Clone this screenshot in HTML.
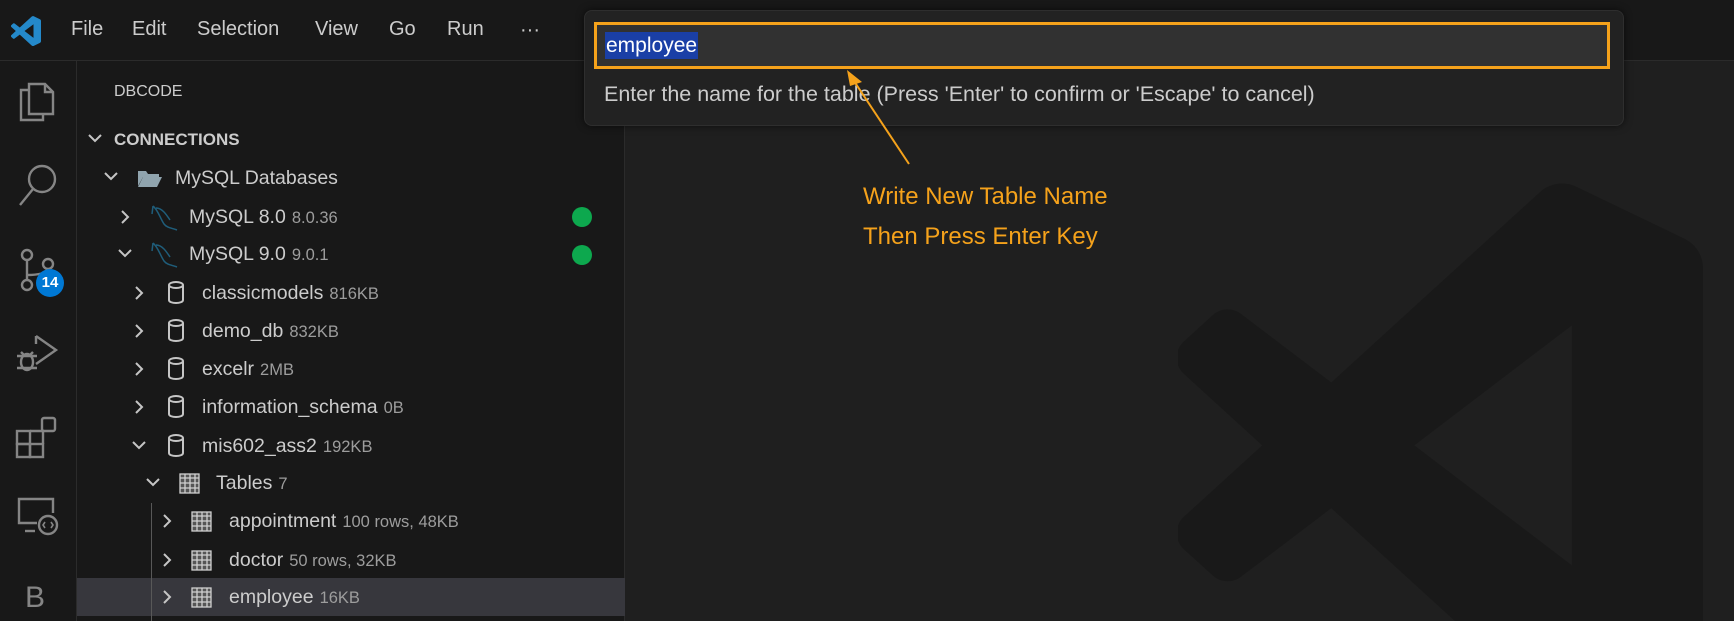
<!DOCTYPE html>
<html style="width:1734px;height:621px;overflow:hidden"><head><meta charset="utf-8"><style>
*{margin:0;padding:0;box-sizing:border-box}
body{width:1734px;height:621px;overflow:hidden;background:#1f1f1f;font-family:"Liberation Sans","DejaVu Sans",sans-serif;color:#cccccc;position:relative}
.abs{position:absolute}
#title{left:0;top:0;width:1734px;height:61px;background:#181818;border-bottom:1px solid #2b2b2b}
.menu{position:absolute;top:18px;font-size:20px;color:#cccccc}
#act{left:0;top:61px;width:77px;height:560px;background:#181818;border-right:1px solid #2b2b2b}
#side{left:77px;top:61px;width:548px;height:560px;background:#181818;border-right:1px solid #2b2b2b}
.row{position:absolute;left:0;height:38px;line-height:38px;font-size:19.5px;color:#cccccc;white-space:nowrap}
.d{color:#9d9d9d;font-size:16.5px;margin-left:6px}
</style></head><body>
<div id="title" class="abs"></div>
<svg class="abs" style="left:11px;top:16px" width="30" height="30" viewBox="0 0 100 100"><path fill="#2489ca" fill-rule="evenodd" d="M96.46 10.8L75.86.9C73.47-.25 70.62.24 68.75 2.11L29.2 38.19 11.98 25.12C10.37 23.9 8.12 24 6.63 25.36L1.12 30.37C-.7 32.02-.7 34.88 1.11 36.53L16.05 50.16 1.11 63.79C-.7 65.44-.7 68.3 1.12 69.950L6.63 74.96C8.12 76.32 10.37 76.42 11.98 75.2L29.2 62.13 68.75 98.21C70.62 100.08 73.47 100.57 75.86 99.42L96.46 89.52C98.62 88.48 100 86.29 100 83.89V16.43C100 14.03 98.62 11.84 96.46 10.8ZM75.02 27.3L45.01 50.16 75.02 73.02Z"/></svg>
<div class="menu" style="left:71px">File</div>
<div class="menu" style="left:132px">Edit</div>
<div class="menu" style="left:197px">Selection</div>
<div class="menu" style="left:315px">View</div>
<div class="menu" style="left:389px">Go</div>
<div class="menu" style="left:447px">Run</div>
<div class="menu" style="left:520px;top:19px">···</div>

<div id="act" class="abs"></div>
<svg class="abs" style="left:17px;top:80px" width="40" height="44" viewBox="0 0 40 44" fill="none" stroke="#858585" stroke-width="2.4"><path d="M12 10H4V40H26V34"/><path d="M12 4H28L36 12V34H12Z"/><path d="M28 4V12H36"/></svg>
<svg class="abs" style="left:17px;top:162px" width="42" height="46" fill="none" stroke="#858585" stroke-width="2.4"><circle cx="25" cy="17" r="13"/><path d="M16 27L3 43"/></svg>
<svg class="abs" style="left:18px;top:247px" width="40" height="46" fill="none" stroke="#858585" stroke-width="2.4"><circle cx="9" cy="8" r="5"/><circle cx="9" cy="38" r="5"/><circle cx="30" cy="17" r="5"/><path d="M9 13V33M9 28C20 28 30 26 30 22"/></svg>
<div class="abs" style="left:36px;top:269px;width:28px;height:28px;border-radius:14px;background:#0078d4;color:#fff;font-weight:bold;font-size:15px;text-align:center;line-height:28px">14</div>
<svg class="abs" style="left:12px;top:330px" width="48" height="48" fill="none" stroke="#858585" stroke-width="2.4"><path d="M24 6L44 20L24 34"/><path d="M24 6V14"/><ellipse cx="15" cy="32" rx="6" ry="8"/><path d="M5 26H25M5 38H25M9 22L12 25M21 22L18 25"/></svg>
<svg class="abs" style="left:14px;top:415px" width="46" height="46" fill="none" stroke="#858585" stroke-width="2.4"><rect x="3" y="16" width="13" height="13"/><rect x="3" y="29" width="13" height="13"/><rect x="16" y="29" width="13" height="13"/><rect x="28" y="3" width="13" height="13" rx="2"/><path d="M16 16H29V29"/></svg>
<svg class="abs" style="left:15px;top:495px" width="46" height="44" fill="none" stroke="#858585" stroke-width="2.4"><path d="M22 28H4V4H38V18"/><path d="M10 36H20"/><circle cx="33" cy="30" r="9"/><path d="M30 27L28 30L30 33M36 27L38 30L36 33" stroke-width="1.6"/></svg>
<div class="abs" style="left:25px;top:582px;font-size:30px;line-height:32px;color:#858585">B</div>

<div id="side" class="abs"></div>
<div class="abs" style="left:114px;top:83px;font-size:16px;color:#cccccc">DBCODE</div>
<div class="abs" style="left:77px;top:578px;width:548px;height:38px;background:#37373d"></div>
<div class="abs" style="left:151px;top:503px;width:1px;height:118px;background:#585858"></div>

<svg class="abs" style="left:0;top:0" width="625" height="621" fill="none" stroke="#c5c5c5" stroke-width="2">
<path d="M89 135L95 141L101 135"/>
<path d="M105 173L111 179L117 173"/>
<path d="M122 211L128 217L122 223"/>
<path d="M119 250L125 256L131 250"/>
<path d="M136 287L142 293L136 299"/>
<path d="M136 325L142 331L136 337"/>
<path d="M136 363L142 369L136 375"/>
<path d="M136 401L142 407L136 413"/>
<path d="M133 442L139 448L145 442"/>
<path d="M147 479L153 485L159 479"/>
<path d="M164 515L170 521L164 527"/>
<path d="M164 554L170 560L164 566"/>
<path d="M164 591L170 597L164 603"/>
</svg>
<div class="abs" style="left:114px;top:130px;font-size:17px;font-weight:bold;color:#cccccc">CONNECTIONS</div>
<svg class="abs" style="left:137px;top:168px" width="26" height="20"><path d="M1 3H9L11 6H22V9H6L1 18Z" fill="#90a4ae"/><path d="M6 9H25L20 19H1Z" fill="#90a4ae"/></svg>
<div class="row" style="left:175px;top:159px">MySQL Databases</div>
<svg class="abs" style="left:150px;top:204px" width="30" height="28" fill="none" stroke="#1f5d7a" stroke-width="1.5"><path d="M3 2C8 6 10 14 14 20C17 24 22 24 27 26M6 4C12 4 16 10 20 16M3 2L2 10"/></svg>
<svg class="abs" style="left:150px;top:241px" width="30" height="28" fill="none" stroke="#1f5d7a" stroke-width="1.5"><path d="M3 2C8 6 10 14 14 20C17 24 22 24 27 26M6 4C12 4 16 10 20 16M3 2L2 10"/></svg>
<div class="row" style="left:189px;top:198px">MySQL 8.0<span class="d">8.0.36</span></div>
<div class="row" style="left:189px;top:235px">MySQL 9.0<span class="d">9.0.1</span></div>
<div class="abs" style="left:572px;top:207px;width:20px;height:20px;border-radius:10px;background:#0da84e"></div>
<div class="abs" style="left:572px;top:245px;width:20px;height:20px;border-radius:10px;background:#0da84e"></div>
<svg class="abs" style="left:166px;top:281px" width="20" height="200" fill="none" stroke="#c5c5c5" stroke-width="2">
<g id="db"><ellipse cx="10" cy="4" rx="7" ry="3"/><path d="M3 4V19C3 23 17 23 17 19V4"/></g>
<use href="#db" y="38"/><use href="#db" y="76"/><use href="#db" y="114"/><use href="#db" y="153"/>
</svg>
<div class="row" style="left:202px;top:274px">classicmodels<span class="d">816KB</span></div>
<div class="row" style="left:202px;top:312px">demo_db<span class="d">832KB</span></div>
<div class="row" style="left:202px;top:350px">excelr<span class="d">2MB</span></div>
<div class="row" style="left:202px;top:388px">information_schema<span class="d">0B</span></div>
<div class="row" style="left:202px;top:427px">mis602_ass2<span class="d">192KB</span></div>
<svg class="abs" style="left:0;top:0" width="625" height="621" fill="none" stroke="#d0d0d0" stroke-width="1.3">
<g id="tb"><rect x="180" y="474" width="19" height="19" fill="#555"/><path d="M180 478H199M180 483H199M180 488H199M185 474V493M190 474V493M195 474V493"/></g>
<use href="#tb" x="12" y="38"/><use href="#tb" x="12" y="77"/><use href="#tb" x="12" y="114"/>
</svg>
<div class="row" style="left:216px;top:464px">Tables<span class="d">7</span></div>
<div class="row" style="left:229px;top:502px">appointment<span class="d">100 rows, 48KB</span></div>
<div class="row" style="left:229px;top:541px">doctor<span class="d">50 rows, 32KB</span></div>
<div class="row" style="left:229px;top:578px;height:38px">employee<span class="d">16KB</span></div>

<div class="abs" style="left:1178px;top:182px;width:525px;height:439px;overflow:hidden">
<svg width="525" height="525" viewBox="0 0 100 100" style="display:block"><path fill="#191919" fill-rule="evenodd" d="M96.46 10.8L75.86.9C73.47-.25 70.62.24 68.75 2.11L29.2 38.19 11.98 25.12C10.37 23.9 8.12 24 6.63 25.36L1.12 30.37C-.7 32.02-.7 34.88 1.11 36.53L16.05 50.16 1.11 63.79C-.7 65.44-.7 68.3 1.12 69.95L6.63 74.96C8.12 76.32 10.37 76.42 11.98 75.2L29.2 62.13 68.75 98.21C70.62 100.08 73.47 100.57 75.86 99.42L96.46 89.52C98.62 88.48 100 86.29 100 83.89V16.43C100 14.03 98.62 11.84 96.46 10.8ZM75.02 27.3L45.01 50.16 75.02 73.02Z"/></svg>
</div>

<div class="abs" style="left:584px;top:10px;width:1040px;height:116px;background:#222222;border:1px solid #2e2e2e;border-radius:8px;box-shadow:0 0 8px rgba(0,0,0,.6)"></div>
<div class="abs" style="left:594px;top:22px;width:1016px;height:47px;background:#313131;border:3px solid #f5a21b"></div>
<div class="abs" style="left:605px;top:32px;height:27px;padding:0 1px;background:#1a3fa6;color:#fff;font-size:21px;line-height:27px">employee</div>
<div class="abs" style="left:604px;top:82px;font-size:21.5px;color:#cccccc;white-space:nowrap">Enter the name for the table (Press 'Enter' to confirm or 'Escape' to cancel)</div>
<svg class="abs" style="left:830px;top:60px" width="100" height="110"><path d="M79 104L22 18" stroke="#f5a21b" stroke-width="2"/><path d="M17 10L32 22L20 26Z" fill="#f5a21b"/></svg>
<div class="abs" style="left:863px;top:183px;font-size:24px;color:#f5a21b;white-space:nowrap">Write New Table Name</div>
<div class="abs" style="left:863px;top:223px;font-size:24px;color:#f5a21b;white-space:nowrap">Then Press Enter Key</div>
</body></html>
